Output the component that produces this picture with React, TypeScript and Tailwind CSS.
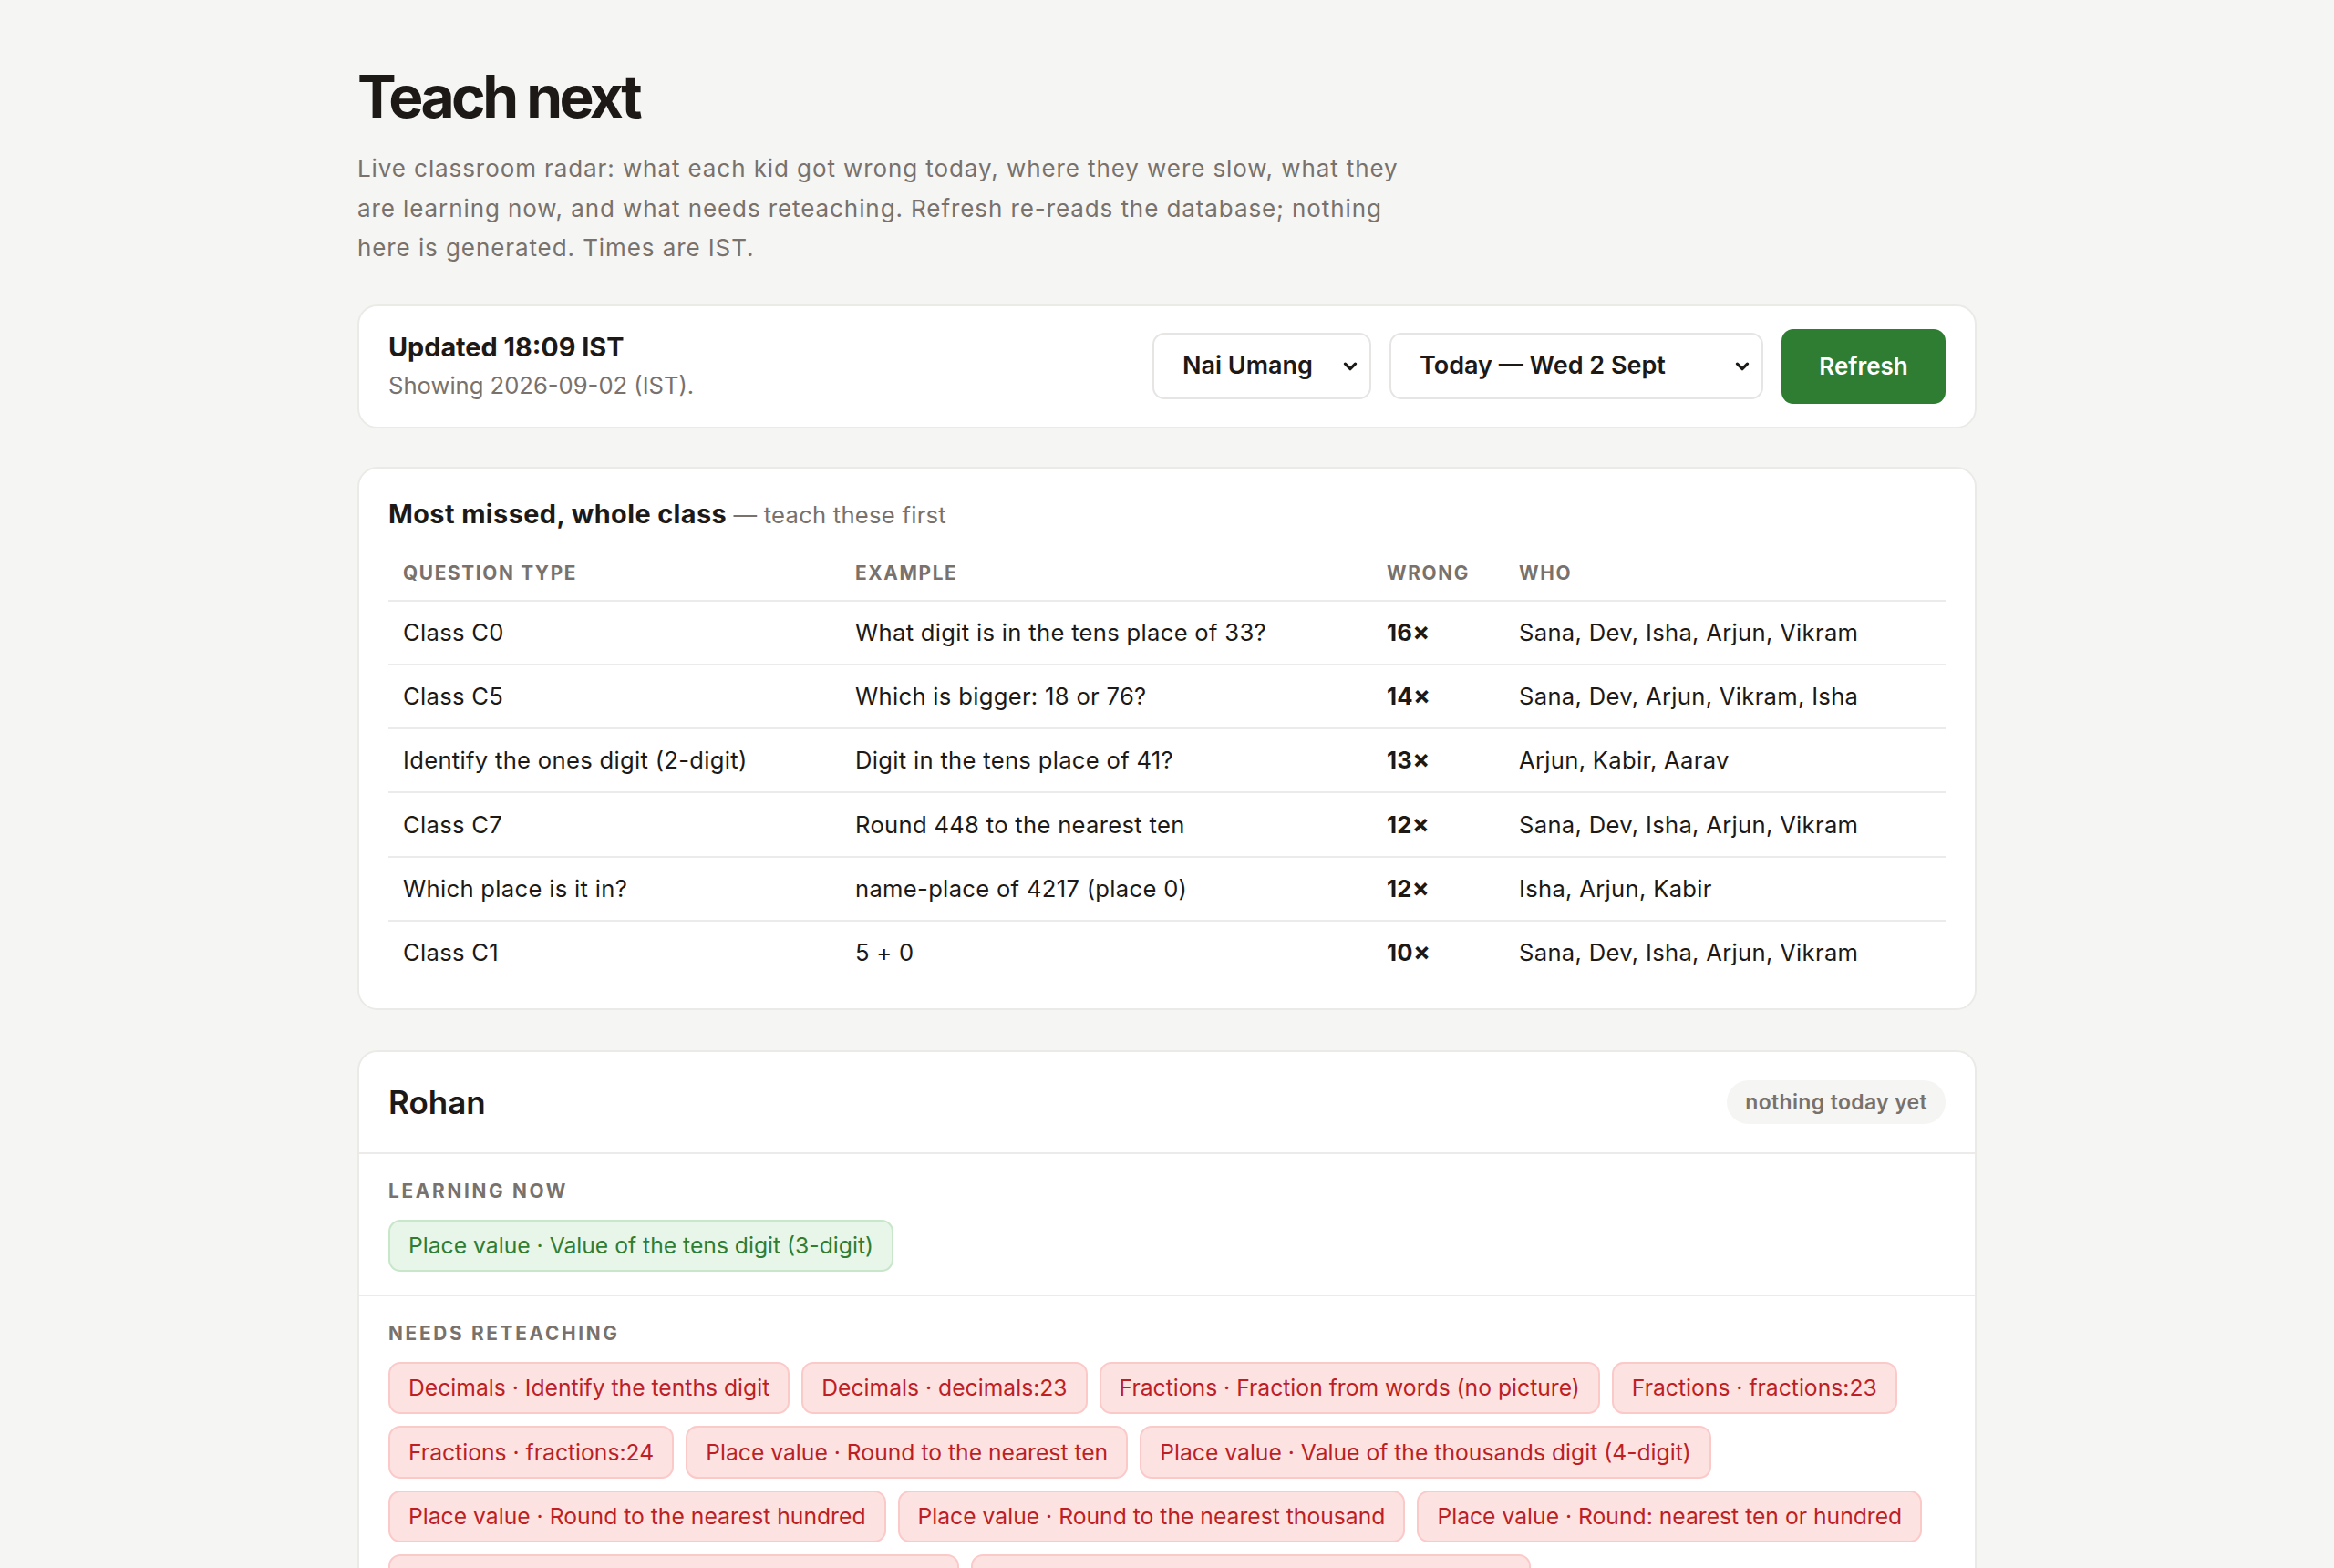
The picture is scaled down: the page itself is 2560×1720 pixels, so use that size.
import { useState } from "react";

type MissRow = {
  readonly type: string;
  readonly example: string;
  readonly wrong: number;
  readonly who: string;
};

const MISSED: readonly MissRow[] = [
  { type: "Class C0", example: "What digit is in the tens place of 33?", wrong: 16, who: "Sana, Dev, Isha, Arjun, Vikram" },
  { type: "Class C5", example: "Which is bigger: 18 or 76?", wrong: 14, who: "Sana, Dev, Arjun, Vikram, Isha" },
  { type: "Identify the ones digit (2-digit)", example: "Digit in the tens place of 41?", wrong: 13, who: "Arjun, Kabir, Aarav" },
  { type: "Class C7", example: "Round 448 to the nearest ten", wrong: 12, who: "Sana, Dev, Isha, Arjun, Vikram" },
  { type: "Which place is it in?", example: "name-place of 4217 (place 0)", wrong: 12, who: "Isha, Arjun, Kabir" },
  { type: "Class C1", example: "5 + 0", wrong: 10, who: "Sana, Dev, Isha, Arjun, Vikram" },
];

const LEARNING = ["Place value · Value of the tens digit (3-digit)"];

const RETEACH = [
  "Decimals · Identify the tenths digit",
  "Decimals · decimals:23",
  "Fractions · Fraction from words (no picture)",
  "Fractions · fractions:23",
  "Fractions · fractions:24",
  "Place value · Round to the nearest ten",
  "Place value · Value of the thousands digit (4-digit)",
  "Place value · Round to the nearest hundred",
  "Place value · Round to the nearest thousand",
  "Place value · Round: nearest ten or hundred",
  "Place value · Value of the thousands digit (5-digit)",
  "Place value · Value of the hundreds digit (3-digit)",
];

const CLASSES = ["Nai Umang", "Nai Disha"];
const DAYS = ["Today — Wed 2 Sept", "Tue 1 Sept", "Mon 31 Aug"];

const CELL = "px-[16px] py-[12.4px] text-[25.6px] leading-[43.5px] tracking-[0.012em]";

export default function App() {
  const [klass, setKlass] = useState(CLASSES[0]);
  const [day, setDay] = useState(DAYS[0]);

  return (
    <div className="min-h-screen bg-[#f5f5f3] font-[Inter,sans-serif] text-[#1c1917]">
      <main className="mx-auto w-[1776px] pt-[71px] pb-[64px]">
        <h1 className="text-[64px] leading-[70px] font-bold tracking-[-0.055em]">Teach next</h1>
        <p className="mt-[22px] text-[26px] leading-[43.5px] tracking-[0.035em] text-[#78716c]">
          Live classroom radar: what each kid got wrong today, where they were slow, what they
          <br />
          are learning now, and what needs reteaching. Refresh re-reads the database; nothing
          <br />
          here is generated. Times are IST.
        </p>

        <section className="mt-[40px] flex items-center justify-between rounded-[22px] border-2 border-[#ebeae7] bg-white px-[32px] py-[25px]">
          <div className="flex flex-col">
            <span className="text-[28.8px] leading-[40px] font-bold">Updated 18:09 IST</span>
            <span className="mt-[3px] text-[25.6px] leading-[38.4px] text-[#78716c]">
              Showing 2026-09-02 (IST).
            </span>
          </div>
          <div className="flex items-center gap-[20px]">
            <PlainSelect value={klass} onChange={setKlass} options={CLASSES} className="w-[240px]" />
            <PlainSelect value={day} onChange={setDay} options={DAYS} className="w-[410px]" />
            <button className="h-[82px] w-[180px] rounded-[13px] bg-[#2e7d32] text-[26px] font-semibold text-white">
              Refresh
            </button>
          </div>
        </section>

        <section className="mt-[42px] rounded-[22px] border-2 border-[#ebeae7] bg-white px-[32px] pt-[30px] pb-[27px]">
          <h2 className="text-[28.8px] leading-[40px] font-bold tracking-[0.015em]">
            Most missed, whole class{" "}
            <span className="text-[25.6px] font-normal tracking-[0.01em] text-[#78716c]">— teach these first</span>
          </h2>
          <table className="mt-[15px] w-full table-fixed border-collapse">
            <colgroup>
              <col className="w-[496px]" />
              <col className="w-[583px]" />
              <col className="w-[145px]" />
              <col />
            </colgroup>
            <thead>
              <tr>
                {["Question type", "Example", "Wrong", "Who"].map((h) => (
                  <th
                    key={h}
                    className="border-b-2 border-[#ecebe9] px-[16px] pt-[13px] pb-[14px] text-left text-[20.8px] leading-[31px] font-bold tracking-[0.08em] text-[#78716c] uppercase"
                  >
                    {h}
                  </th>
                ))}
              </tr>
            </thead>
            <tbody>
              {MISSED.map((r, i) => {
                const line = i < MISSED.length - 1 ? "border-b-2 border-[#ecebe9]" : "";
                return (
                  <tr key={r.type + i}>
                    <td className={`${line} ${CELL}`}>{r.type}</td>
                    <td className={`${line} ${CELL}`}>{r.example}</td>
                    <td className={`${line} ${CELL} font-bold`}>
                      {r.wrong}
                      <span className="text-[28px]">×</span>
                    </td>
                    <td className={`${line} ${CELL}`}>{r.who}</td>
                  </tr>
                );
              })}
            </tbody>
          </table>
        </section>

        <section className="mt-[44px] rounded-[22px] border-2 border-[#ebeae7] bg-white">
          <div className="flex items-center justify-between border-b-2 border-[#ecebe9] px-[32px] py-[31px]">
            <h3 className="text-[35px] leading-[46px] font-semibold">Rohan</h3>
            <span className="flex h-[48px] items-center rounded-full bg-[#f5f5f4] px-[20px] text-[23px] font-semibold tracking-[0.015em] text-[#78716c]">
              nothing today yet
            </span>
          </div>
          <div className="border-b-2 border-[#ecebe9] px-[32px] py-[24.6px]">
            <Label>Learning now</Label>
            <div className="mt-[16px] flex flex-wrap gap-[13px]">
              {LEARNING.map((c) => (
                <Chip key={c} tone="green">
                  {c}
                </Chip>
              ))}
            </div>
          </div>
          <div className="px-[32px] py-[24.6px]">
            <Label>Needs reteaching</Label>
            <div className="mt-[16px] flex flex-wrap gap-[13px]">
              {RETEACH.map((c) => (
                <Chip key={c} tone="red">
                  {c}
                </Chip>
              ))}
            </div>
          </div>
        </section>
      </main>
    </div>
  );
}

function PlainSelect({
  value,
  onChange,
  options,
  className,
}: {
  readonly value: string;
  readonly onChange: (v: string) => void;
  readonly options: readonly string[];
  readonly className: string;
}) {
  return (
    <div className={`relative h-[73px] ${className}`}>
      <select
        value={value}
        onChange={(e) => onChange(e.target.value)}
        className="h-full w-full appearance-none rounded-[13px] border-2 border-[#e7e5e4] bg-white pl-[31px] pr-[44px] text-[27px] font-semibold text-[#1c1917] outline-none"
      >
        {options.map((o) => (
          <option key={o}>{o}</option>
        ))}
      </select>
      <svg
        viewBox="0 0 16 10"
        className="pointer-events-none absolute top-1/2 right-[15px] h-[10px] w-[16px] -translate-y-1/2"
        fill="none"
        stroke="#1c1917"
        strokeWidth="3.2"
        strokeLinecap="round"
        strokeLinejoin="round"
      >
        <path d="M2.5 2.2l5.5 5.5 5.5-5.5" />
      </svg>
    </div>
  );
}

function Label({ children }: { readonly children: string }) {
  return (
    <div className="text-[20.8px] leading-[31px] font-bold tracking-[0.13em] text-[#78716c] uppercase">
      {children}
    </div>
  );
}

function Chip({ children, tone }: { readonly children: string; readonly tone: "green" | "red" }) {
  const colors =
    tone === "green"
      ? "border-[#c8e6c9] bg-[#e8f5e9] text-[#2e7d32]"
      : "border-[#fcc9c9] bg-[#fde2e2] text-[#bd1f24]";
  return (
    <span className={`inline-flex rounded-[13px] border-2 px-[20px] py-[7.6px] text-[24.7px] leading-[38.4px] ${colors}`}>
      {children}
    </span>
  );
}
